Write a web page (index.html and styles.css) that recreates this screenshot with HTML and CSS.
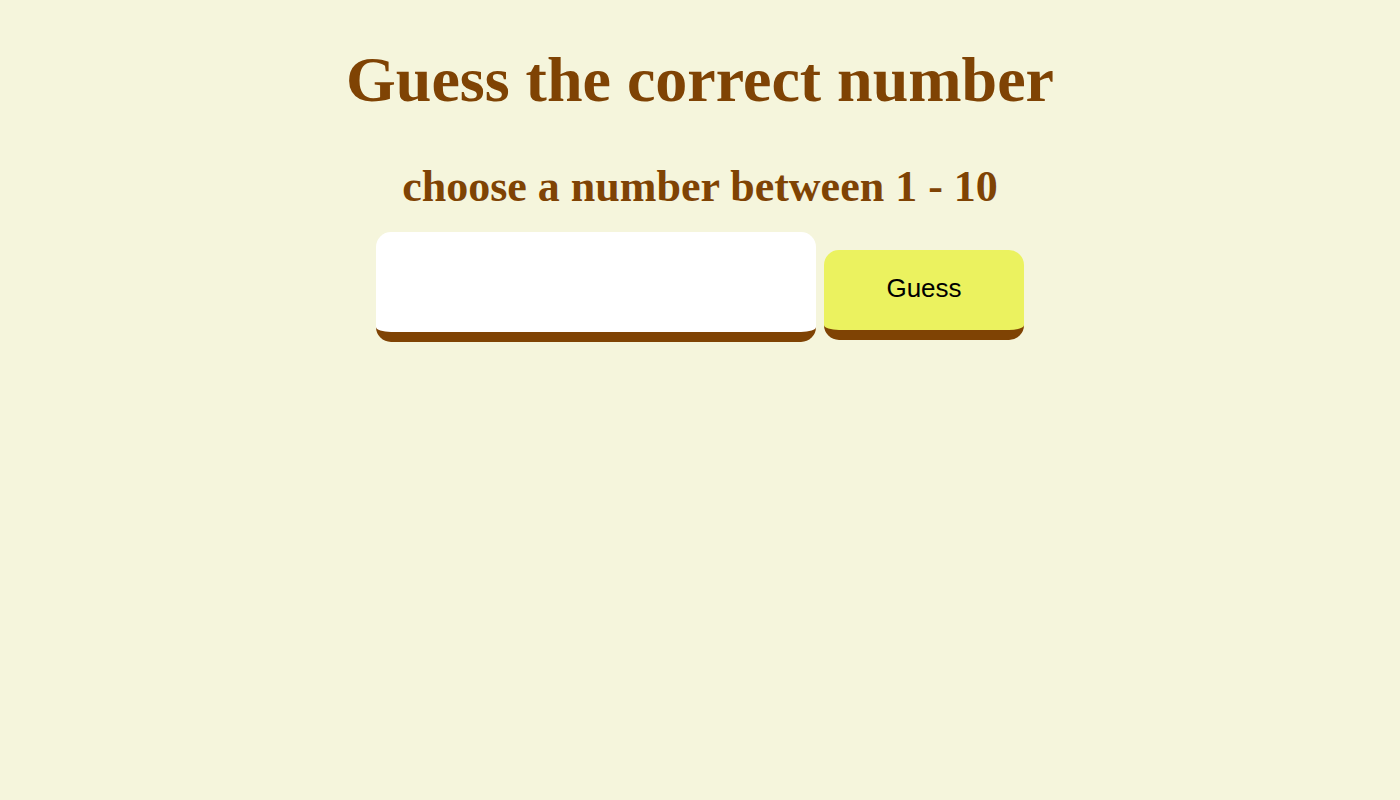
FILE: index.html
```html
<!DOCTYPE html>
<html lang="en">
<head>
<meta charset="utf-8">
<title>Guess the correct number</title>
<link rel="stylesheet" href="styles.css">
</head>
<body>
<main class="game">
  <h1 class="title">Guess the correct number</h1>
  <h2 class="subtitle">choose a number between 1 - 10</h2>
  <div class="controls">
    <input class="guess-input" type="text">
    <button class="guess-btn" type="button">Guess</button>
  </div>
</main>
</body>
</html>
```
FILE: styles.css
```css
html, body {
  margin: 0;
  padding: 0;
}
body {
  background: #f5f5dc;
  font-family: "Liberation Serif", "Times New Roman", serif;
}
.game {
  display: flex;
  flex-direction: column;
  align-items: center;
  padding-top: 43px;
}
.title {
  margin: 0;
  font-size: 64px;
  font-weight: bold;
  line-height: 74px;
  color: #7f4304;
}
.subtitle {
  margin: 44px 0 0;
  font-size: 44px;
  font-weight: bold;
  line-height: 51px;
  color: #7f4304;
}
.controls {
  display: flex;
  align-items: flex-start;
  gap: 8px;
  margin-top: 20px;
}
.guess-input {
  box-sizing: border-box;
  width: 440px;
  height: 110px;
  border: none;
  border-bottom: 10px solid #7f4304;
  border-radius: 15px;
  background: #ffffff;
  outline: none;
  font-size: 24px;
  padding: 0 16px;
}
.guess-btn {
  box-sizing: border-box;
  width: 200px;
  height: 90px;
  margin-top: 18px;
  padding: 0 0 4px;
  border: none;
  border-bottom: 10px solid #7f4304;
  border-radius: 15px;
  background: #ebf25f;
  font-family: "Liberation Sans", Arial, sans-serif;
  font-size: 26px;
  color: #000;
}
```
